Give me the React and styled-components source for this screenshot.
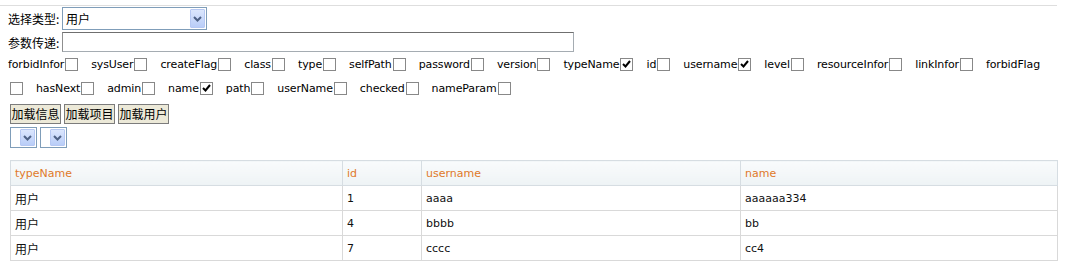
import React from 'react';
import styled, { createGlobalStyle } from 'styled-components';

const GlobalStyle = createGlobalStyle`
  body {
    margin: 0;
    background: #fff;
    font-family: "DejaVu Sans", Verdana, sans-serif;
    font-size: 11px;
    color: #000;
  }
`;

const rowOne = [
  ['forbidInfor', false],
  ['sysUser', false],
  ['createFlag', false],
  ['class', false],
  ['type', false],
  ['selfPath', false],
  ['password', false],
  ['version', false],
  ['typeName', true],
  ['id', false],
  ['username', true],
  ['level', false],
  ['resourceInfor', false],
  ['linkInfor', false],
];

const rowTwo = [
  ['hasNext', false],
  ['admin', false],
  ['name', true],
  ['path', false],
  ['userName', false],
  ['checked', false],
  ['nameParam', false],
];

const rows = [
  ['用户', '1', 'aaaa', 'aaaaaa334'],
  ['用户', '4', 'bbbb', 'bb'],
  ['用户', '7', 'cccc', 'cc4'],
];

function Chevron() {
  return (
    <svg width="9" height="6" viewBox="0 0 9 6">
      <path d="M1 1 L4.5 4.5 L8 1" fill="none" stroke="#4d6185" strokeWidth="2" />
    </svg>
  );
}

function Dropdown({ value, width, height }) {
  return (
    <SelectBox width={width} height={height}>
      <SelectValue>{value}</SelectValue>
      <DropButton>
        <Chevron />
      </DropButton>
    </SelectBox>
  );
}

function Check({ checked, first }) {
  return (
    <CheckBox first={first}>
      {checked && (
        <svg width="11" height="11" viewBox="0 0 11 11">
          <path d="M2 5 L4.5 7.5 L9 2" fill="none" stroke="#000" strokeWidth="2" />
        </svg>
      )}
    </CheckBox>
  );
}

export default function App() {
  return (
    <>
      <GlobalStyle />
      <TopRule />
      <Page>
        <FieldRow gap={2}>
          <Label>选择类型:</Label>
          <Dropdown value="用户" width={145} height={23} />
        </FieldRow>
        <FieldRow gap={0}>
          <Label>参数传递:</Label>
          <TextInput />
        </FieldRow>

        <CheckRow>
          {rowOne.map(([name, on]) => (
            <React.Fragment key={name}>
              <CheckLabel>{name}</CheckLabel>
              <Check checked={on} />
            </React.Fragment>
          ))}
          <CheckLabel>forbidFlag</CheckLabel>
        </CheckRow>
        <CheckRow>
          <Check first />
          {rowTwo.map(([name, on]) => (
            <React.Fragment key={name}>
              <CheckLabel>{name}</CheckLabel>
              <Check checked={on} />
            </React.Fragment>
          ))}
        </CheckRow>

        <ButtonRow top={4}>
          <Button>加载信息</Button>
          <Button>加载项目</Button>
          <Button>加载用户</Button>
        </ButtonRow>
        <ButtonRow top={3}>
          <Dropdown width={27} height={21} />
          <Dropdown width={27} height={21} />
        </ButtonRow>

        <Table>
          <colgroup>
            <col style={{ width: 332 }} />
            <col style={{ width: 79 }} />
            <col style={{ width: 319 }} />
            <col style={{ width: 317 }} />
          </colgroup>
          <thead>
            <tr>
              <Th>typeName</Th>
              <Th>id</Th>
              <Th>username</Th>
              <Th>name</Th>
            </tr>
          </thead>
          <tbody>
            {rows.map((r) => (
              <tr key={r[1]}>
                <Td cjk>{r[0]}</Td>
                <Td>{r[1]}</Td>
                <Td>{r[2]}</Td>
                <Td>{r[3]}</Td>
              </tr>
            ))}
          </tbody>
        </Table>
      </Page>
    </>
  );
}

const TopRule = styled.div`
  width: 1057px;
  height: 5px;
  border-bottom: 1px solid #dedede;
`;

const Page = styled.div`
  padding: 1px 8px 0 8px;
`;

const FieldRow = styled.div`
  display: flex;
  align-items: center;
  margin-bottom: ${(p) => p.gap}px;
`;

const Label = styled.span`
  font-family: "Noto Sans CJK SC", sans-serif;
  font-size: 12px;
  width: 54px;
  white-space: nowrap;
`;

const SelectBox = styled.div`
  box-sizing: border-box;
  width: ${(p) => p.width}px;
  height: ${(p) => p.height}px;
  border: 1px solid #7f9db9;
  background: #fff;
  display: flex;
  align-items: stretch;
  padding: 1px;
`;

const SelectValue = styled.span`
  flex: 1;
  font-family: "Noto Sans CJK SC", sans-serif;
  font-size: 12px;
  line-height: 19px;
  padding-left: 2px;
`;

const DropButton = styled.span`
  width: 15px;
  box-sizing: border-box;
  border: 1px solid #b6c8f3;
  border-radius: 1px;
  background: linear-gradient(#dbe6fd, #b9cdf8);
  display: flex;
  align-items: center;
  justify-content: center;
`;

const TextInput = styled.div`
  box-sizing: border-box;
  width: 512px;
  height: 20px;
  border: 1px solid #a5acb2;
  border-top-color: #6f6f6f;
  border-left-color: #8f8f8f;
  background: #fff;
`;

const CheckRow = styled.div`
  display: flex;
  align-items: center;
  height: 24px;
  white-space: nowrap;
`;

const CheckLabel = styled.span`
  font-size: 11px;
  letter-spacing: -0.12px;
  color: #000;
`;

const CheckBox = styled.span`
  box-sizing: border-box;
  width: 13px;
  height: 13px;
  margin: 0 13px 0 ${(p) => (p.first ? 2 : 1)}px;
  border: 1px solid #888;
  background: #fff;
  display: inline-flex;
  align-items: center;
  justify-content: center;
`;

const ButtonRow = styled.div`
  display: flex;
  gap: 3px;
  margin: ${(p) => p.top}px 0 0 2px;
`;

const Button = styled.button`
  box-sizing: border-box;
  height: 20px;
  width: 51px;
  padding: 0;
  border: 1px solid #7c7c7c;
  background: #ece9d8;
  font-family: "Noto Sans CJK SC", sans-serif;
  font-size: 12px;
  line-height: 18px;
  color: #000;
`;

const Table = styled.table`
  margin: 12px 0 0 2px;
  width: 1047px;
  border-collapse: collapse;
  table-layout: fixed;
  border: 1px solid #d6d6d6;
`;

const Th = styled.th`
  height: 24px;
  padding: 0 4px;
  text-align: left;
  font-weight: normal;
  font-size: 11px;
  color: #e0792a;
  background: linear-gradient(#f9fbfc, #eef3f5);
  border: 1px solid #d6dde2;
`;

const Td = styled.td`
  height: 24px;
  padding: 0 4px;
  font-family: ${(p) => (p.cjk ? '"Noto Sans CJK SC", sans-serif' : '"DejaVu Sans", sans-serif')};
  font-size: ${(p) => (p.cjk ? 12 : 11)}px;
  color: #111;
  border: 1px solid #d9d9d9;
`;
